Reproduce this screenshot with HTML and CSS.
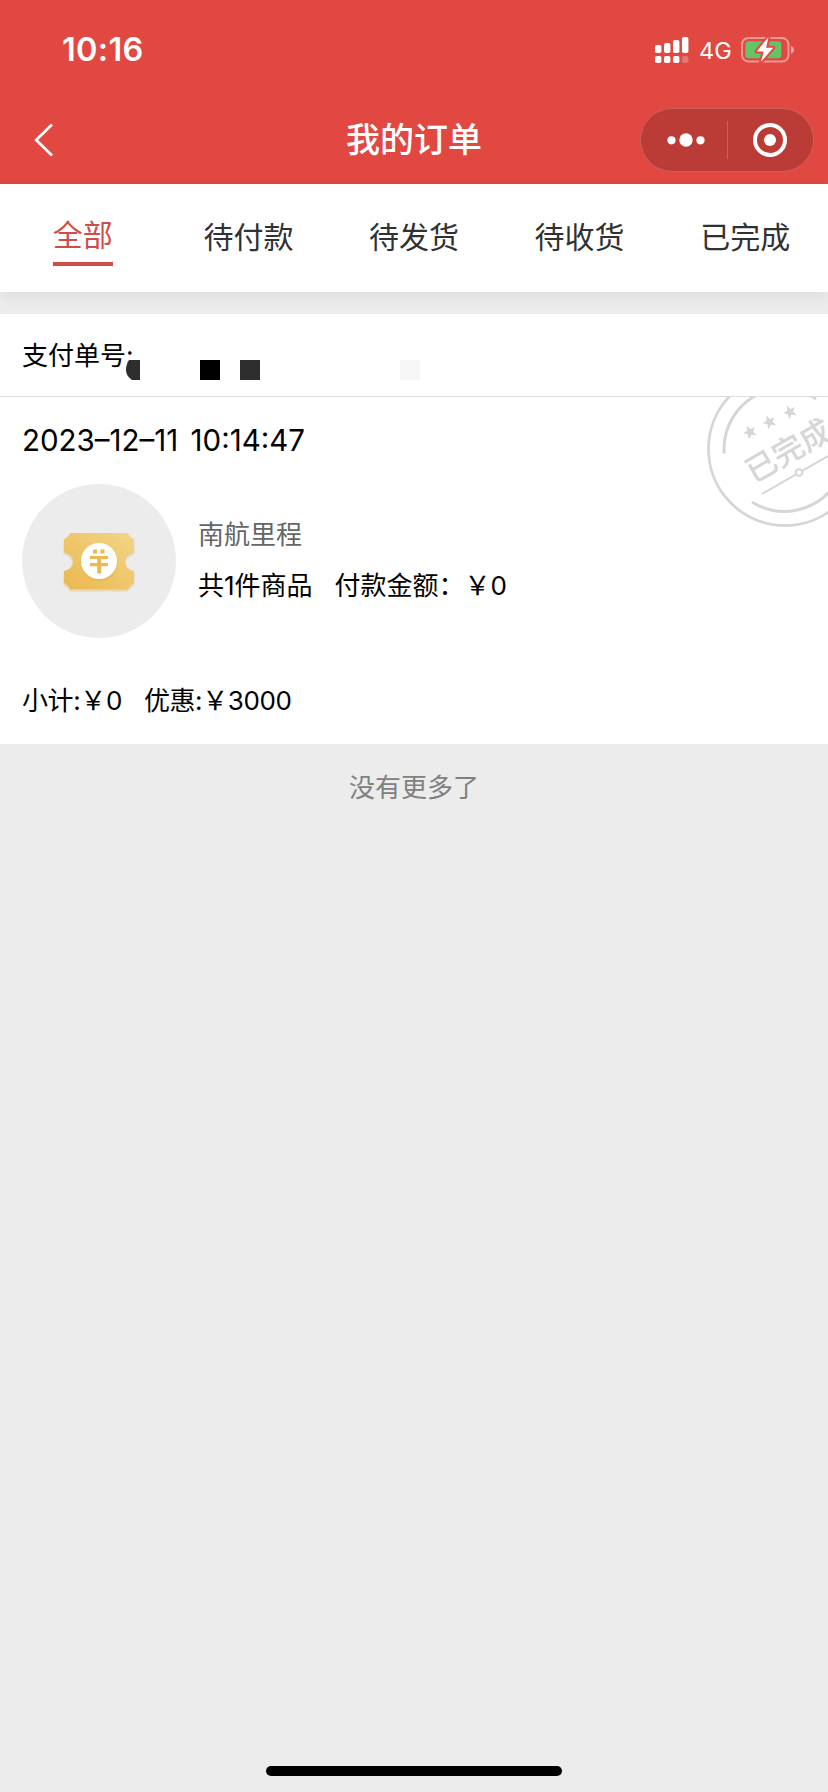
FILE: index.html
```html
<!DOCTYPE html>
<html lang="zh-CN">
<head>
<meta charset="utf-8">
<title>我的订单</title>
<link rel="stylesheet" href="styles.css">
</head>
<body>
<div class="screen">
  <header class="header">
    <div class="status">
      <span class="time">10:16</span>
      <div class="status-right">
        <svg class="signal" width="34" height="26" viewBox="0 0 34 26" fill="#fff">
          <rect x="0" y="8" width="6.4" height="8" rx="1.8"/><rect x="9" y="6" width="6.4" height="10" rx="1.8"/><rect x="18" y="3" width="6.4" height="13" rx="1.8"/><rect x="27" y="0" width="6.4" height="16" rx="1.8"/>
          <rect x="0" y="19" width="6.4" height="7" rx="1.8"/><rect x="9" y="19" width="6.4" height="7" rx="1.8"/><rect x="18" y="19" width="6.4" height="7" rx="1.8"/><rect x="27" y="19" width="6.4" height="7" rx="1.8" opacity=".25"/>
        </svg>
        <span class="net">4G</span>
        <svg class="battery" width="54" height="28" viewBox="0 0 54 28">
          <rect x="1" y="2" width="46.5" height="23.5" rx="6.5" fill="none" stroke="#fff" stroke-opacity=".45" stroke-width="2"/>
          <rect x="4.3" y="5.2" width="36" height="17" rx="3.2" fill="#64c466"/>
          <path d="M50 10c4 1.300 4 6.500 0 7.800z" fill="#fff" fill-opacity=".5"/>
          <path d="M27.500 1 15.600 15.400h7.200L19.800 26 32.300 11.800h-7.200z" fill="#fff" stroke="#e14842" stroke-width="4" paint-order="stroke" stroke-linejoin="round"/>
        </svg>
      </div>
    </div>
    <div class="nav">
      <svg class="back" width="20" height="34" viewBox="0 0 20 34"><path d="M18 1.500 2.200 17 18 32.500" fill="none" stroke="#fff" stroke-width="2.700"/></svg>
      <h1 class="title">我的订单</h1>
      <div class="capsule">
        <svg class="more" width="38" height="14" viewBox="0 0 38 14" fill="#fff"><circle cx="4.500" cy="7.300" r="4.100"/><circle cx="19" cy="7" r="6.700"/><circle cx="33.500" cy="7.300" r="4.100"/></svg>
        <span class="divider"></span>
        <svg class="target" width="34" height="34" viewBox="0 0 34 34"><circle cx="17" cy="17" r="15" fill="none" stroke="#fff" stroke-width="4"/><circle cx="17" cy="17" r="6" fill="#fff"/></svg>
      </div>
    </div>
  </header>

  <nav class="tabs">
    <span class="tab"><span class="tab-on">全部</span></span>
    <span class="tab">待付款</span>
    <span class="tab">待发货</span>
    <span class="tab">待收货</span>
    <span class="tab">已完成</span>
  </nav>

  <main class="order">
    <div class="order-no">支付单号:
      <svg class="mask" width="296" height="22" viewBox="0 0 296 22">
        <path d="M3 0H14V20H6C2 17 0 14 0 10C0 6 1 3 3 0z" fill="#2d2d2d"/>
        <rect x="74" width="20" height="20"/><rect x="114" width="20" height="20" fill="#2d2d2d"/><rect x="274" width="20" height="20" fill="#f7f7f7"/>
      </svg>
    </div>
    <div class="order-body">
      <svg class="stamp" width="128" height="140" viewBox="700 397 128 140" fill="none" stroke="#d6d6d6">
        <circle cx="785" cy="449" r="76.500" stroke-width="2.800"/>
        <path d="M724.200 453.500A61 61 0 0 1 761 393M806 393.500A61 61 0 0 1 816 399M752 502A61 61 0 0 0 834 486" stroke-width="3"/>
        <g fill="#d6d6d6" stroke="none">
          <path id="star" transform="translate(750 432) rotate(-28)" d="M0-7 1.900-2.300 6.700-2.200 3 1 4.300 5.900 0 3.200-4.300 5.900-3 1-6.700-2.200-1.900-2.300z"/>
          <use href="#star" transform="translate(19.500 -10)"/>
          <use href="#star" transform="translate(40 -20)"/>
          <text class="stamp-text" transform="translate(787 448.500) rotate(-30)" text-anchor="middle" dominant-baseline="central">已完成</text>
        </g>
        <path d="M762 494 828 456" stroke-width="2"/>
        <circle cx="799" cy="472.500" r="3.300" fill="#fff" stroke-width="2"/>
      </svg>
      <div class="date">2023–12–11 10:14:47</div>
      <div class="item">
        <div class="thumb">
          <svg width="80" height="70" viewBox="0 0 80 70">
            <defs>
              <linearGradient id="gold" x1="0" y1="1" x2="1" y2="0"><stop offset="0" stop-color="#eab84e"/><stop offset="1" stop-color="#f4d588"/></linearGradient>
              <filter id="soft" x="-20%" y="-20%" width="140%" height="150%"><feDropShadow dx="0" dy="2" stdDeviation="1.300" flood-color="#dba53a" flood-opacity=".45"/></filter>
            </defs>
            <path filter="url(#soft)" fill="url(#gold)" d="M11 7H69Q71 12 75 13V26Q66 28 66 35.500Q66 43 75 45V57Q71 58 69 63H11Q9 58 5 57V45Q14 43 14 35.500Q14 28 5 26V13Q9 12 11 7z"/>
            <circle cx="40" cy="35" r="18" fill="#fff" filter="url(#soft)"/>
            <path d="M34 23.500h4v4h-4zM41.500 23.500h4v4h-4zM31 30h18v3H31zM31 37h18v3.200H31zM38.200 30h4v17.500h-4z" fill="#ebb950"/>
          </svg>
        </div>
        <div class="info">
          <div class="name">南航里程</div>
          <div class="sum"><span>共1件商品</span><span>付款金额：￥0</span></div>
        </div>
      </div>
      <div class="totals"><span>小计:￥0</span><span>优惠:￥3000</span></div>
    </div>
  </main>
  <p class="end">没有更多了</p>

  <svg class="watermark" width="828" height="1608" viewBox="0 184 828 1608">
    <defs>
      <g id="row"><text x="23" y="16" textLength="154">604673</text><text x="232" y="16" textLength="154">604673</text><text x="441" y="16" textLength="154">604673</text><text x="650" y="16" textLength="154">604673</text></g>
    </defs>
    <use href="#row" y="239"/><use href="#row" y="373"/><use href="#row" y="507"/><use href="#row" y="641"/><use href="#row" y="775"/><use href="#row" y="909"/><use href="#row" y="1043"/><use href="#row" y="1177"/><use href="#row" y="1311"/><use href="#row" y="1445"/><use href="#row" y="1579"/><use href="#row" y="1713"/>
  </svg>
  <div class="home"></div>
</div>
</body>
</html>
```
FILE: styles.css
```css
* { box-sizing: border-box; margin: 0; padding: 0; }
body { background: #ececec; }
svg { display: block; flex: none; }
.screen {
  position: relative;
  display: flex;
  flex-direction: column;
  width: 828px;
  height: 1792px;
  overflow: hidden;
  background: #ececec;
  color: #000;
  font: 26px/1.4 Inter, "Noto Sans CJK SC", sans-serif;
  white-space: nowrap;
}
.header { height: 184px; background: #e14842; color: #fff; }
.status { display: flex; justify-content: space-between; height: 96px; padding: 0 33px 0 62px; }
.time { margin-top: 28px; font-size: 32.5px; line-height: 44px; font-weight: 600; letter-spacing: 0.3px; }
.status-right { display: flex; align-items: flex-start; }
.signal { margin-top: 37px; }
.net { width: 52px; padding-left: 10px; margin-top: 34px; font-size: 23.5px; line-height: 34px; }
.battery { margin-top: 36px; }
.nav { display: grid; grid-template-columns: 188px 1fr 188px; align-items: center; height: 88px; }
.back { margin-left: 34px; }
.title { font-size: 34px; line-height: 48px; font-weight: 500; text-align: center; }
.capsule {
  display: flex;
  align-items: center;
  width: 174px;
  height: 64px;
  border: 1px solid #cb605b;
  border-radius: 32px;
  background: #bb3c37;
}
.more { margin-left: 26px; }
.divider { width: 1px; height: 38px; margin-left: 22px; background: #cb605b; }
.target { margin-left: 25px; }

.tabs {
  display: grid;
  grid-template-columns: repeat(5, 1fr);
  height: 108px;
  background: #fff;
  box-shadow: 0 4px 14px rgba(0, 0, 0, .07);
  color: #303133;
  font-size: 30px;
  line-height: 42px;
}
.tab { padding-top: 32px; text-align: center; }
.tab-on { display: block; width: fit-content; height: 52px; margin: -2px auto 0; border-bottom: 4px solid #cf4d49; color: #cf4d49; }

.order { margin-top: 22px; height: 430px; background: #fff; }
.order-no { position: relative; height: 83px; padding: 24px 22px 0; border-bottom: 1px solid #dedede; }
.mask { position: absolute; left: 126px; top: 46px; }
.order-body { position: relative; padding: 22px 22px 0; }
.stamp { position: absolute; right: 0; top: 0; }
.stamp-text { font: 500 31px "Noto Sans CJK SC", sans-serif; }
.date { font-size: 29.5px; line-height: 42px; letter-spacing: 0; word-spacing: 4px; }
.item { display: flex; gap: 22px; margin-top: 23px; }
.thumb { display: flex; align-items: center; justify-content: center; width: 154px; height: 154px; border-radius: 50%; background: #ececec; }
.info { padding-top: 33px; }
.name { color: #666; }
.sum { display: flex; gap: 22px; margin-top: 15px; }
.totals { display: flex; gap: 22px; margin-top: 45px; letter-spacing: -0.4px; }
.end { margin-top: 26px; color: #808080; text-align: center; }

.watermark { position: absolute; left: 0; top: 184px; font: 43px Inter, sans-serif; fill: rgba(0, 0, 0, .009); pointer-events: none; }
.home { width: 296px; height: 10px; margin: auto auto 16px; border-radius: 5px; background: #000; }
```
